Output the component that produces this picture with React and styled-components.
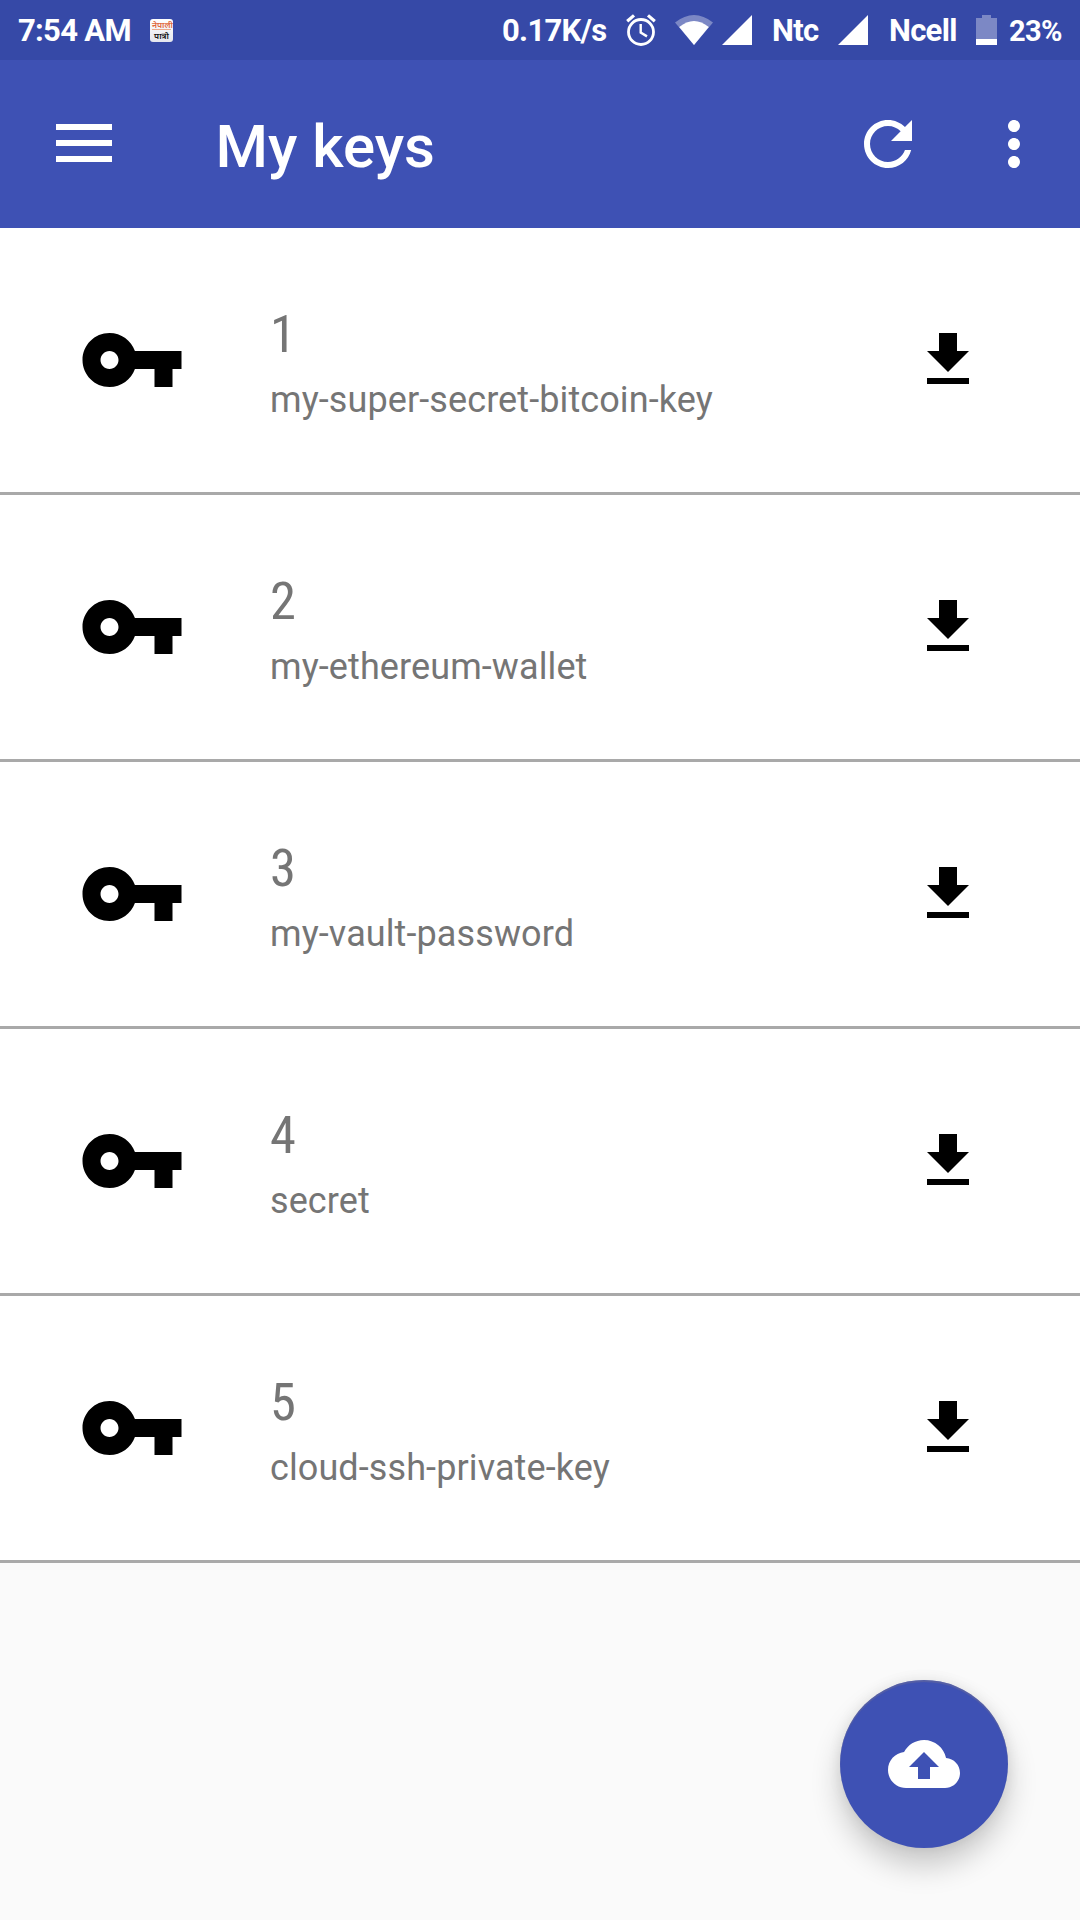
import React from 'react';
import styled, { createGlobalStyle } from 'styled-components';

const Global = createGlobalStyle`
  * { box-sizing: border-box; }
  body { margin: 0; background: #fafafa; font-family: Roboto, "Noto Sans", sans-serif; }
`;

const Screen = styled.div`
  position: relative;
  width: 1080px;
  height: 1920px;
  display: flex;
  flex-direction: column;
  background: #fafafa;
  overflow: hidden;
`;

const StatusBar = styled.header`
  height: 60px;
  flex: none;
  display: flex;
  align-items: center;
  justify-content: space-between;
  padding: 0 19px 0 18px;
  background: #3649a7;
  color: #fff;
`;

const StatusGroup = styled.div`
  display: flex;
  align-items: center;
  height: 60px;
`;

const StatusText = styled.span`
  font-size: ${(p) => p.$size || 31}px;
  font-weight: 700;
  letter-spacing: -0.7px;
  line-height: 60px;
  padding-top: 2px;
  white-space: nowrap;
  width: ${(p) => p.$width}px;
  margin-left: ${(p) => p.$gap || 0}px;
`;

const StatusIcon = styled.svg`
  display: block;
  flex: none;
  margin-left: ${(p) => p.$gap || 0}px;
`;

const CalendarBadge = styled.div`
  width: 23px;
  height: 23px;
  margin-left: 20px;
  border-radius: 3px;
  background: linear-gradient(#ffffff, #e4e6ee);
  display: flex;
  flex-direction: column;
  align-items: center;
  overflow: hidden;
`;

const BadgeLine = styled.span`
  height: 11px;
  width: 19px;
  font-family: "Noto Sans Devanagari", "Noto Sans", sans-serif;
  font-size: 8.5px;
  line-height: 13px;
  font-weight: 600;
  text-align: center;
  white-space: nowrap;
  color: ${(p) => p.$color};
  border-bottom: ${(p) => (p.$ruled ? '1px solid #eba98c' : '0')};
`;

const AppBar = styled.nav`
  height: 168px;
  flex: none;
  display: flex;
  align-items: center;
  padding: 0 30px 0 48px;
  background: #3e51b4;
  color: #fff;
`;

const Title = styled.h1`
  flex: 1;
  margin: 6px 0 0 95.5px;
  font-size: 60px;
  line-height: 70px;
  font-weight: 500;
`;

const IconButton = styled.button`
  width: 72px;
  height: 72px;
  padding: 0;
  border: 0;
  background: none;
  color: inherit;
  margin-left: ${(p) => p.$gap || 0}px;
`;

const Glyph = styled.svg`
  display: block;
  flex: none;
  width: ${(p) => p.$size}px;
  height: ${(p) => p.$size}px;
  fill: currentColor;
`;

const KeyList = styled.ul`
  margin: 0;
  padding: 0;
  list-style: none;
`;

const KeyRow = styled.li`
  height: 267px;
  display: flex;
  align-items: center;
  padding: 0 96px 0 78px;
  background: #fff;
  border-bottom: 3px solid #a9a9a9;
`;

const KeyText = styled.div`
  flex: 1;
  display: flex;
  flex-direction: column;
  margin: 14px 0 0 84px;
  color: #757575;
`;

const KeyNumber = styled.span`
  font-family: "Roboto Condensed", Roboto, sans-serif;
  font-stretch: 75%;
  font-size: 52.5px;
  line-height: 66px;
`;

const KeyName = styled.span`
  font-size: 36px;
  line-height: 66px;
  letter-spacing: 0.1px;
`;

const Fab = styled.button`
  position: absolute;
  right: 72px;
  bottom: 72px;
  width: 168px;
  height: 168px;
  padding: 0;
  border: 0;
  border-radius: 50%;
  display: grid;
  place-items: center;
  background: #3e51b4;
  color: #fff;
  box-shadow: 0 18px 30px rgba(0, 0, 0, 0.2), 0 0 14px rgba(0, 0, 0, 0.08), inset 0 2px 1px rgba(110, 110, 150, 0.5);
`;

const icons = {
  refresh: 'M17.65 6.35C16.2 4.9 14.21 4 12 4c-4.42 0-7.99 3.58-7.99 8s3.57 8 7.99 8c3.73 0 6.84-2.55 7.73-6h-2.08c-.82 2.33-3.04 4-5.65 4-3.31 0-6-2.69-6-6s2.69-6 6-6c1.66 0 3.14.69 4.22 1.78L13 11h7V4l-2.35 2.35z',
  more: 'M12 8c1.1 0 2-.9 2-2s-.9-2-2-2-2 .9-2 2 .9 2 2 2zm0 2c-1.1 0-2 .9-2 2s.9 2 2 2 2-.9 2-2-.9-2-2-2zm0 6c-1.1 0-2 .9-2 2s.9 2 2 2 2-.9 2-2-.9-2-2-2z',
  key: 'M12.65 10C11.83 7.67 9.61 6 7 6c-3.31 0-6 2.69-6 6s2.69 6 6 6c2.61 0 4.83-1.67 5.65-4H17v4h4v-4h2v-4H12.65zM7 14c-1.1 0-2-.9-2-2s.9-2 2-2 2 .9 2 2-.9 2-2 2z',
  download: 'M19 9h-4V3H9v6H5l7 7 7-7zM5 18v2h14v-2H5z',
  cloud: 'M19.35 10.04C18.67 6.59 15.64 4 12 4 9.11 4 6.6 5.64 5.35 8.04 2.34 8.36 0 10.91 0 14c0 3.31 2.69 6 6 6h13c2.76 0 5-2.24 5-5 0-2.64-2.05-4.78-4.65-4.96zM14 13v4h-4v-4H7l5-5 5 5h-3z',
};

const Icon = ({ name, size = 72 }) => (
  <Glyph $size={size} viewBox="0 0 24 24"><path d={icons[name]} /></Glyph>
);

const Signal = ({ gap }) => (
  <StatusIcon $gap={gap} width="30" height="30" viewBox="0 0 30 30"><path d="M30 0V30H0Z" fill="#fff" /></StatusIcon>
);

const keys = [
  'my-super-secret-bitcoin-key',
  'my-ethereum-wallet',
  'my-vault-password',
  'secret',
  'cloud-ssh-private-key',
];

export default function App() {
  return (
    <Screen>
      <Global />
      <StatusBar>
        <StatusGroup>
          <StatusText $width={112}>7:54 AM</StatusText>
          <CalendarBadge>
            <BadgeLine $color="#e0683c" $ruled>नेपाली</BadgeLine>
            <BadgeLine $color="#111">पात्रो</BadgeLine>
          </CalendarBadge>
        </StatusGroup>
        <StatusGroup>
          <StatusText $width={106}>0.17K/s</StatusText>
          <StatusIcon $gap={18} width="30" height="32" viewBox="0 0 30 32" fill="none" stroke="#fff">
            <circle cx="15" cy="18" r="12.5" strokeWidth="2.8" />
            <path d="M14.7 10V18.6L21 22.4" strokeWidth="2.4" />
            <path d="M1.2 7.2L8 1.4M22 1.4L28.8 7.2" strokeWidth="3.2" />
          </StatusIcon>
          <StatusIcon $gap={19} width="38" height="30" viewBox="0 0 38 30">
            <path d="M0 7.5Q19-7.5 38 7.5L19 30Z" fill="#fff" opacity=".35" />
            <path d="M4.2 12Q19 0 33.8 12L19 30Z" fill="#fff" />
          </StatusIcon>
          <Signal gap={9} />
          <StatusText $width={48} $gap={20}>Ntc</StatusText>
          <Signal gap={18} />
          <StatusText $width={69} $gap={21}>Ncell</StatusText>
          <StatusIcon $gap={18} width="21" height="30" viewBox="0 0 21 30">
            <path d="M6 0H15V3H21V24H0V3H6Z" fill="#fff" opacity=".35" />
            <path d="M0 24H21V30H0Z" fill="#fff" />
          </StatusIcon>
          <StatusText $size={29} $width={52} $gap={12}>23%</StatusText>
        </StatusGroup>
      </StatusBar>
      <AppBar>
        <IconButton aria-label="Menu">
          <Glyph $size={72} viewBox="0 0 72 72"><path d="M8 16H64V22H8ZM8 32H64V38H8ZM8 48H64V54H8Z" /></Glyph>
        </IconButton>
        <Title>My keys</Title>
        <IconButton aria-label="Refresh"><Icon name="refresh" /></IconButton>
        <IconButton aria-label="More" $gap={54}><Icon name="more" /></IconButton>
      </AppBar>
      <KeyList>
        {keys.map((name, i) => (
          <KeyRow key={name}>
            <Icon name="key" size={108} />
            <KeyText>
              <KeyNumber>{i + 1}</KeyNumber>
              <KeyName>{name}</KeyName>
            </KeyText>
            <Icon name="download" />
          </KeyRow>
        ))}
      </KeyList>
      <Fab aria-label="Upload"><Icon name="cloud" /></Fab>
    </Screen>
  );
}
